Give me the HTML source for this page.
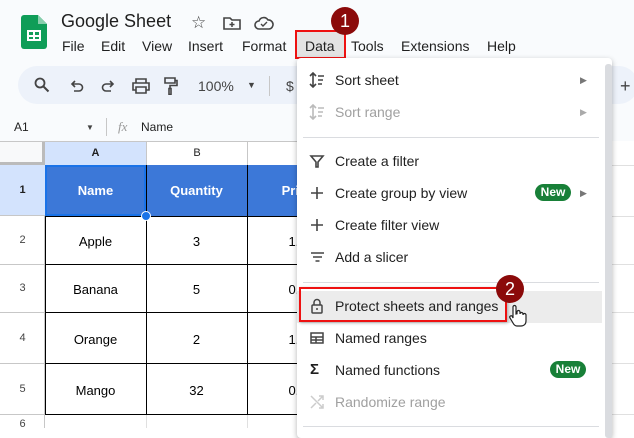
<!DOCTYPE html>
<html><head><style>
*{margin:0;padding:0;box-sizing:border-box}
body{width:634px;height:428px;overflow:hidden;background:#fff;font-family:"Liberation Sans",Arial,sans-serif;position:relative;color:#1f1f1f}
.top{position:absolute;left:0;top:0;width:634px;height:141px;background:#f9fbfd}
.a{position:absolute}
.menu span{position:absolute;top:38px;font-size:14px;color:#1f1f1f}
.pill{position:absolute;left:18px;top:66px;width:620px;height:38px;background:#edf2fa;border-radius:19px}
.grid .c{position:absolute;font-size:13px;text-align:center;color:#000}
.dd{position:absolute;left:297px;top:58px;width:315px;height:380px;background:#fff;box-shadow:0 2px 6px rgba(0,0,0,.3);border-radius:4px}
.it{position:absolute;left:0;width:308px;height:32px;font-size:14px;color:#1f1f1f;line-height:32px;padding-left:38px}
.it svg{position:absolute;left:12px;top:8px}
.dis{color:#a0a0a0}
.hr{position:absolute;left:6px;width:296px;height:1px;background:#dadce0}
.new{position:absolute;background:#188038;color:#fff;font-size:12px;font-weight:bold;border-radius:9px;width:36px;height:17px;line-height:17px;text-align:center}
.arr{position:absolute;left:283px;font-size:9px;color:#777}
.badge{position:absolute;width:28px;height:28px;border-radius:50%;background:#8b0a0a;color:#fff;font-size:18px;text-align:center;line-height:28px}
</style></head><body>
<div class="top"></div>
<svg class="a" style="left:21px;top:15px" width="26" height="34" viewBox="0 0 26 34"><path d="M3 0h14l9 9v22a3 3 0 0 1-3 3H3a3 3 0 0 1-3-3V3a3 3 0 0 1 3-3z" fill="#0f9d58"/><path d="M17 0v9h9z" fill="#87ceac"/><rect x="6" y="15" width="14" height="11" fill="#fff"/><rect x="8" y="17" width="4" height="3" fill="#0f9d58"/><rect x="14" y="17" width="4" height="3" fill="#0f9d58"/><rect x="8" y="22" width="4" height="2" fill="#0f9d58"/><rect x="14" y="22" width="4" height="2" fill="#0f9d58"/></svg>
<div class="a" style="left:61px;top:11px;font-size:18px;color:#1f1f1f">Google Sheet</div>
<div class="a" style="left:191px;top:13px;font-size:17px;color:#444">☆</div>
<svg class="a" style="left:223px;top:16px" width="18" height="14"><path d="M1 2h6l2 2h8v9H1z" fill="none" stroke="#444" stroke-width="1.6"/><path d="M9 6v5M6.5 8.5h5" stroke="#444" stroke-width="1.5"/></svg>
<svg class="a" style="left:254px;top:16px" width="20" height="14"><path d="M5 13a4 4 0 0 1 0-8 5 5 0 0 1 9-1 4.5 4.5 0 0 1 1 9z" fill="none" stroke="#444" stroke-width="1.6"/><path d="M7 8l2 2 4-4" fill="none" stroke="#444" stroke-width="1.4"/></svg>
<div class="menu"><span style="left:62px">File</span><span style="left:101px">Edit</span><span style="left:142px">View</span><span style="left:188px">Insert</span><span style="left:242px">Format</span><span style="left:305px">Data</span><span style="left:351px">Tools</span><span style="left:401px">Extensions</span><span style="left:487px">Help</span></div>
<div class="a" style="left:295px;top:30px;width:51px;height:29px;background:#e3e3e3;border:2px solid #e11;"></div>
<div class="a" style="left:305px;top:38px;font-size:14px">Data</div>
<div class="badge" style="left:331px;top:7px">1</div>
<div class="pill"></div>
<div class="a" style="left:35px;top:76px;font-size:16px;color:#444">&#9906;</div>
<svg class="a" style="left:34px;top:77px" width="16" height="16"><circle cx="6" cy="6" r="4.5" fill="none" stroke="#444" stroke-width="1.8"/><path d="M9.5 9.5l5 5" stroke="#444" stroke-width="2"/></svg>
<div class="a" style="left:30px;top:76px;width:22px;height:20px;background:#edf2fa"></div>
<svg class="a" style="left:34px;top:77px" width="16" height="16"><circle cx="6" cy="6" r="4.5" fill="none" stroke="#444" stroke-width="1.8"/><path d="M9.5 9.5l5 5" stroke="#444" stroke-width="2"/></svg>
<svg class="a" style="left:70px;top:80px" width="14" height="12"><path d="M3 4h6a3.5 3.5 0 0 1 0 7H4M5 1L2 4l3 3" fill="none" stroke="#444" stroke-width="1.6"/></svg>
<svg class="a" style="left:101px;top:80px" width="14" height="12"><path d="M11 4H5a3.5 3.5 0 0 0 0 7h5M9 1l3 3-3 3" fill="none" stroke="#444" stroke-width="1.6"/></svg>
<svg class="a" style="left:132px;top:78px" width="18" height="16"><path d="M4 5V1h10v4M4 12H1V5h16v7h-3M4 9h10v6H4z" fill="none" stroke="#444" stroke-width="1.6"/></svg>
<svg class="a" style="left:164px;top:77px" width="14" height="18"><path d="M1 1h10v5H1zM11 3.5h2v5H6v3M5 11.5h2v6H5z" fill="none" stroke="#444" stroke-width="1.6"/></svg>
<div class="a" style="left:198px;top:78px;font-size:14px;color:#444">100%</div>
<div class="a" style="left:247px;top:80px;font-size:9px;color:#444">▼</div>
<div class="a" style="left:269px;top:76px;width:1px;height:20px;background:#c7c7c7"></div>
<div class="a" style="left:286px;top:78px;font-size:14px;color:#444">$</div>
<div class="a" style="left:620px;top:76px;font-size:18px;color:#444">+</div>
<div class="a" style="left:14px;top:120px;font-size:12px">A1</div>
<div class="a" style="left:86px;top:123px;font-size:8px;color:#444">▼</div>
<div class="a" style="left:106px;top:118px;width:1px;height:18px;background:#c7c7c7"></div>
<div class="a" style="left:118px;top:119px;font-size:13px;color:#999;font-style:italic;font-family:'Liberation Serif',serif">fx</div>
<div class="a" style="left:141px;top:120px;font-size:12px">Name</div>
<div class="grid">
<div class="a" style="left:0;top:141px;width:634px;height:1px;background:#c7c7c7"></div>
<div class="a" style="left:0;top:142px;width:45px;height:23px;background:#f8f9fa;border-right:3px solid #bbb;border-bottom:3px solid #bbb"></div>
<div class="a" style="left:45px;top:142px;width:101px;height:23px;background:#d3e3fd;font-size:11px;font-weight:bold;text-align:center;line-height:23px">A</div>
<div class="a" style="left:146px;top:142px;width:101px;height:23px;border-left:1px solid #c7c7c7;font-size:11px;text-align:center;line-height:23px">B</div>
<div class="a" style="left:247px;top:142px;width:60px;height:23px;border-left:1px solid #c7c7c7"></div>
<div class="a" style="left:0;top:165px;width:45px;height:51px;background:#d3e3fd;font-size:11px;font-weight:bold;text-align:center;line-height:51px;border-bottom:1px solid #c7c7c7">1</div>
<div class="a" style="left:45px;top:165px;width:260px;height:51px;background:#3c78d8"></div>
<div class="a" style="left:45px;top:165px;width:101px;height:51px;border:2px solid #1a73e8"></div>
<div class="a" style="left:247px;top:165px;width:1px;height:250px;background:#000"></div>
<div class="a" style="left:146px;top:165px;width:1px;height:250px;background:#000"></div>
<div class="a" style="left:45px;top:216px;width:1px;height:199px;background:#000"></div>
<div class="c" style="left:45px;top:183px;width:101px;color:#fff;font-weight:bold">Name</div>
<div class="c" style="left:146px;top:183px;width:101px;color:#fff;font-weight:bold">Quantity</div>
<div class="c" style="left:247px;top:183px;width:101px;color:#fff;font-weight:bold">Price</div>
<div class="a" style="left:45px;top:216px;width:260px;height:1px;background:#000"></div>
<div class="a" style="left:45px;top:264px;width:260px;height:1px;background:#000"></div>
<div class="a" style="left:45px;top:312px;width:260px;height:1px;background:#000"></div>
<div class="a" style="left:45px;top:363px;width:260px;height:1px;background:#000"></div>
<div class="a" style="left:45px;top:414px;width:260px;height:1px;background:#000"></div>
<div class="a" style="left:0;top:264px;width:45px;height:1px;background:#c7c7c7"></div>
<div class="a" style="left:0;top:312px;width:45px;height:1px;background:#c7c7c7"></div>
<div class="a" style="left:0;top:363px;width:45px;height:1px;background:#c7c7c7"></div>
<div class="a" style="left:0;top:414px;width:45px;height:1px;background:#c7c7c7"></div>
<div class="a" style="left:44px;top:216px;width:1px;height:212px;background:#c7c7c7"></div>
<div class="a" style="left:146px;top:415px;width:1px;height:13px;background:#e0e0e0"></div>
<div class="a" style="left:247px;top:415px;width:1px;height:13px;background:#e0e0e0"></div>
<div class="c" style="left:0;top:234px;width:45px;font-size:11px;color:#444">2</div>
<div class="c" style="left:0;top:282px;width:45px;font-size:11px;color:#444">3</div>
<div class="c" style="left:0;top:332px;width:45px;font-size:11px;color:#444">4</div>
<div class="c" style="left:0;top:383px;width:45px;font-size:11px;color:#444">5</div>
<div class="c" style="left:0;top:418px;width:45px;font-size:11px;color:#444">6</div>
<div class="c" style="left:45px;top:234px;width:101px">Apple</div><div class="c" style="left:146px;top:234px;width:101px">3</div><div class="c" style="left:247px;top:234px;width:101px">1.5</div>
<div class="c" style="left:45px;top:282px;width:101px">Banana</div><div class="c" style="left:146px;top:282px;width:101px">5</div><div class="c" style="left:247px;top:282px;width:101px">0.5</div>
<div class="c" style="left:45px;top:332px;width:101px">Orange</div><div class="c" style="left:146px;top:332px;width:101px">2</div><div class="c" style="left:247px;top:332px;width:101px">1.2</div>
<div class="c" style="left:45px;top:383px;width:101px">Mango</div><div class="c" style="left:146px;top:383px;width:101px">32</div><div class="c" style="left:247px;top:383px;width:101px">0.8</div>
<div class="a" style="left:141px;top:211px;width:10px;height:10px;border-radius:50%;background:#1a73e8;border:1.5px solid #fff"></div>
<div class="a" style="left:612px;top:141px;width:22px;height:287px;background:#fff"></div>
<div class="a" style="left:612px;top:165px;width:22px;height:1px;background:#e0e0e0"></div>
<div class="a" style="left:612px;top:216px;width:22px;height:1px;background:#e0e0e0"></div>
<div class="a" style="left:612px;top:264px;width:22px;height:1px;background:#e0e0e0"></div>
<div class="a" style="left:612px;top:312px;width:22px;height:1px;background:#e0e0e0"></div>
<div class="a" style="left:612px;top:363px;width:22px;height:1px;background:#e0e0e0"></div>
<div class="a" style="left:612px;top:414px;width:22px;height:1px;background:#e0e0e0"></div>
</div>
<div class="dd">
<div class="a" style="left:308px;top:6px;width:7px;height:374px;background:#dadce0;border-radius:3px"></div>
<div class="it" style="top:6px"><svg width="16" height="16"><path d="M4 1v14M1 4l3-3 3 3M1 12l3 3 3-3M9 4h6M9 8h5M9 12h4" fill="none" stroke="#444" stroke-width="1.6"/></svg>Sort sheet<span class="arr">▶</span></div>
<div class="it dis" style="top:38px"><svg width="16" height="16"><path d="M4 1v14M1 4l3-3 3 3M1 12l3 3 3-3M9 4h6M9 8h5M9 12h4" fill="none" stroke="#bbb" stroke-width="1.6"/></svg>Sort range<span class="arr" style="color:#aaa">▶</span></div>
<div class="hr" style="top:79px"></div>
<div class="it" style="top:87px"><svg width="16" height="16"><path d="M2 3h12l-5 6v5H7V9z" fill="none" stroke="#444" stroke-width="1.6"/></svg>Create a filter</div>
<div class="it" style="top:119px"><svg width="16" height="16"><path d="M8 2v12M2 8h12" stroke="#444" stroke-width="1.6"/></svg>Create group by view<span class="new" style="left:238px;top:7px">New</span><span class="arr">▶</span></div>
<div class="it" style="top:151px"><svg width="16" height="16"><path d="M8 2v12M2 8h12" stroke="#444" stroke-width="1.6"/></svg>Create filter view</div>
<div class="it" style="top:183px"><svg width="16" height="16"><path d="M2 4h13M4 8h9M6.5 12h4" stroke="#444" stroke-width="1.6"/></svg>Add a slicer</div>
<div class="hr" style="top:224px"></div>
<div class="a" style="left:0;top:233px;width:305px;height:32px;background:#ececec"></div>
<div class="it" style="top:232px"><svg width="16" height="16"><rect x="3" y="7" width="10" height="8" rx="1" fill="none" stroke="#444" stroke-width="1.5"/><path d="M5 7V4.5a3 3 0 0 1 6 0V7" fill="none" stroke="#444" stroke-width="1.5"/><circle cx="8" cy="11" r="1" fill="#444"/></svg>Protect sheets and ranges</div>
<div class="it" style="top:264px"><svg width="16" height="16"><path d="M2 3h12v10H2zM2 7h12M2 10h12M7 7v6" fill="none" stroke="#444" stroke-width="1.5"/></svg>Named ranges</div>
<div class="it" style="top:296px"><span style="position:absolute;left:13px;font-size:15px;font-weight:bold">Σ</span>Named functions<span class="new" style="left:253px;top:7px">New</span></div>
<div class="it dis" style="top:328px"><svg width="16" height="16"><path d="M2 2l12 12M10 2h4v4M14 2L9 7M7 9l-5 5M10 14h4v-4" fill="none" stroke="#ccc" stroke-width="1.5"/></svg>Randomize range</div>
<div class="hr" style="top:368px"></div>
</div>
<div class="a" style="left:299px;top:287px;width:208px;height:35px;border:2px solid #e11;box-shadow:1px 1px 3px rgba(0,0,0,.3)"></div>
<div class="badge" style="left:496px;top:275px">2</div>
<svg class="a" style="left:508px;top:304px" width="20" height="24" viewBox="0 0 20 24"><path d="M5 3a1.5 1.5 0 0 1 3 0v7l1-.2V8a1.5 1.5 0 0 1 3 0v2a1.5 1.5 0 0 1 3 0v1a1.5 1.5 0 0 1 3 0v6c0 3-2 5-5 5H9c-2 0-3-1-4-3l-3-5a1.4 1.4 0 0 1 2.3-1.6L5 14z" fill="#fff" stroke="#222" stroke-width="1.2"/></svg>
</body></html>
